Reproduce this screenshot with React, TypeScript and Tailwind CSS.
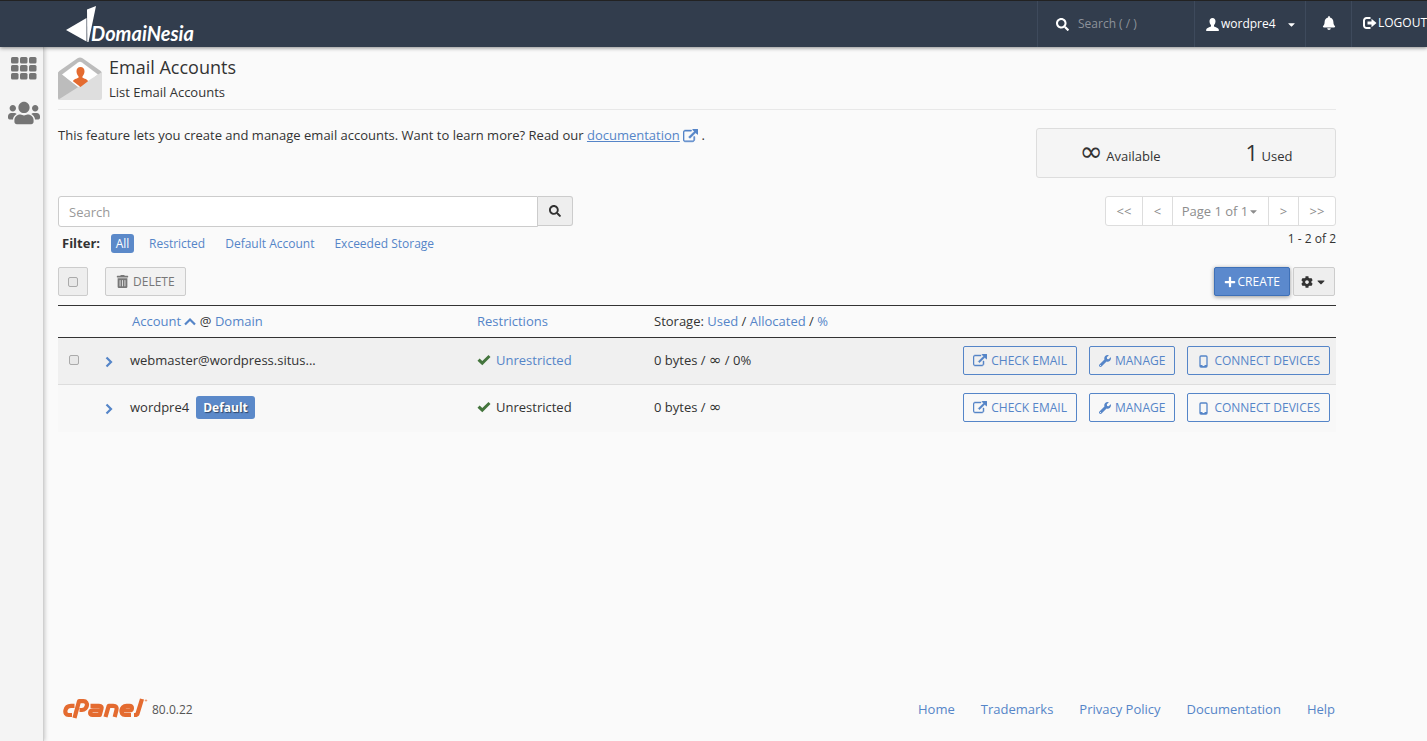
import type { ReactNode } from "react";
import { FaBell, FaCaretDown, FaCog, FaPlus, FaSearch, FaTrashAlt, FaUsers, FaWrench } from "react-icons/fa";

const link = "text-[#5585c8] hover:underline";

function ExternalLinkIcon({ size = 15 }: { size?: number }) {
  return (
    <svg width={size} height={size} viewBox="0 0 1792 1792" fill="currentColor" stroke="currentColor" strokeWidth="60" className="inline-block shrink-0" aria-hidden>
      <path d="M1408 928v320q0 119-84.5 203.5t-203.5 84.5h-832q-119 0-203.5-84.5t-84.5-203.5v-832q0-119 84.5-203.5t203.5-84.5h704q14 0 23 9t9 23v64q0 14-9 23t-23 9h-704q-66 0-113 47t-47 113v832q0 66 47 113t113 47h832q66 0 113-47t47-113v-320q0-14 9-23t23-9h64q14 0 23 9t9 23zm384-864v512q0 26-19 45t-45 19-45-19l-176-176-652 652q-10 10-23 10t-23-10l-114-114q-10-10-10-23t10-23l652-652-176-176q-19-19-19-45t19-45 45-19h512q26 0 45 19t19 45z" />
    </svg>
  );
}

function MobileIcon() {
  return (
    <svg width="13" height="13" viewBox="0 0 13 13" aria-hidden>
      <rect x="3" y="1" width="7" height="11" rx="1" fill="none" stroke="currentColor" strokeWidth="1.3" />
      <path d="M3 10h2.500v1h2v-1H10v2H3z" fill="currentColor" />
    </svg>
  );
}

function UserIcon() {
  return (
    <svg width="13" height="13" viewBox="0 0 13 13" fill="currentColor" className="shrink-0" aria-hidden>
      <path d="M6.500 0C8.400 0 9.500 1.400 9.500 3.300c0 1.500-.6 3-1.500 3.900v1.200c1.600.9 4.500 1.400 4.800 3V13H.2v-1.600c.3-1.600 3.200-2.100 4.800-3V7.200c-.9-.9-1.500-2.400-1.500-3.900C3.500 1.400 4.600 0 6.500 0z" />
    </svg>
  );
}

function LogoutIcon() {
  return (
    <svg width="14" height="12" viewBox="0 0 14 12" className="shrink-0" aria-hidden>
      <path d="M7.500 1H3.500A2.500 2.500 0 0 0 1 3.500v5A2.500 2.500 0 0 0 3.500 11h4" fill="none" stroke="currentColor" strokeWidth="2" />
      <path d="M4.500 4.500h4V1.800L13.500 6l-5 4.200V7.500h-4z" fill="currentColor" />
    </svg>
  );
}

function Chevron({ up = false }: { up?: boolean }) {
  return (
    <svg width="12" height="12" viewBox="0 0 12 12" fill="none" stroke="currentColor" strokeWidth="2.200" className="inline-block" aria-hidden>
      <path d={up ? "M1 8.500l5-5 5 5" : "M3.500 1.500L8 6l-4.500 4.500"} />
    </svg>
  );
}

function CheckIcon() {
  return (
    <svg width="14" height="12" viewBox="0 0 14 12" fill="#44753d" aria-hidden>
      <path d="M.5 6.700L2.600 4.500l2.700 2.600L11.500 1l2 2-8.200 8.200z" />
    </svg>
  );
}

function GridIcon() {
  const cells = [0, 9, 18];
  return (
    <svg width="26" height="23" viewBox="0 0 26 23" fill="#757575" aria-hidden>
      {cells.map((x) => cells.map((y) => <rect key={`${x}-${y}`} x={x} y={y * 0.89} width="7.500" height="6.600" rx="1.500" />))}
    </svg>
  );
}

function MailboxIcon() {
  return (
    <svg width="44" height="44" viewBox="0 0 44 44" className="mt-px" aria-hidden>
      <path d="M0 16.500Q0 15 1.300 14L19.500 1.200q2.500-1.600 5 0L42.700 14Q44 15 44 16.500V40H0z" fill="#bcbcbc" />
      <path d="M4 17.500L20 5.500q2-1.300 4 0l16 12L22 32z" fill="#fff" />
      <path d="M0 15l22 16.500L6 43H2q-2 0-2-2z" fill="#bcbcbc" />
      <path d="M44 15v26q0 2-2 2H2q-.9 0-1.400-.6z" fill="#dedede" />
      <path d="M22.500 10c2.600 0 4 1.700 4 4.300 0 2-.8 3.700-2 4.900v1.500c2 1 5 1.300 5.500 3.500L22.500 30 15 24.200c.5-2.200 3.500-2.500 5.500-3.500v-1.500c-1.200-1.200-2-2.900-2-4.900 0-2.600 1.400-4.300 4-4.300z" fill="#e46b30" />
    </svg>
  );
}

function DomainesiaLogo() {
  return (
    <svg width="140" height="40" viewBox="0 0 140 40" role="img" aria-label="DomaiNesia">
      <path d="M0 24L20.500 12v23.500z" fill="#fff" />
      <path d="M21 3.500L30 0 25 24 22.500 36 21.300 36z" fill="#fff" />
      <text x="25" y="35" fill="#fff" fontFamily="Lato, sans-serif" fontSize="20" fontWeight="700" fontStyle="italic">DomaiNesia</text>
    </svg>
  );
}

function CpanelLogo() {
  return (
    <svg width="85" height="22" viewBox="0 0 85 22" fill="none" stroke="#e46b30" strokeWidth="4.200" strokeLinejoin="round" role="img" aria-label="cPanel">
      <path d="M11.500 7.800H8C1.500 7.800.5 17 5.500 17h3.500" />
      <path d="M11.500 20L16 3.200h4.500c5.500 0 4 8.800-1.500 8.800h-2.500" />
      <path d="M27.500 7.800h8.500c2.500 0 3 1.200 2.500 3L36.800 17H29.500c-3.500 0-3-4.600.5-4.600h7" />
      <path d="M42.500 19l3.200-11.200h4.500c3 0 4 1.500 3.200 4.500L51.700 19" />
      <path d="M68 17h-6c-5.500 0-4.500-9.200 1.500-9.200h3c3.500 0 3 4.600 0 4.600h-6" />
      <path d="M71 17h1c1.200 0 2.300-.5 2.600-1.600L79 1" />
      <circle cx="83" cy="2.500" r=".7" strokeWidth=".7" />
    </svg>
  );
}

function Infinity({ large = false }: { large?: boolean }) {
  return <span className={`font-['DejaVu_Sans',sans-serif] leading-none ${large ? "text-[28px]" : "text-[15px]"}`}>∞</span>;
}

function ActionButton({ icon, children }: { icon: ReactNode; children: ReactNode }) {
  return (
    <button className="flex h-[29px] items-center gap-1 rounded-[2px] border border-[#5585c8] px-[9px] pt-[2px] text-[12px] text-[#5585c8] whitespace-nowrap">
      {icon}
      {children}
    </button>
  );
}

function Header() {
  return (
    <header className="relative z-20 flex h-[47px] shrink-0 items-stretch overflow-hidden border-t border-[#222] bg-[#323d4d] text-[12px] text-white shadow-[0_1px_4px_rgba(0,0,0,0.45)]">
      <a href="#" className="mt-[5px] ml-[66px]">
        <DomainesiaLogo />
      </a>
      <div className="ml-auto flex shrink-0 items-stretch">
        <label className="flex w-[157px] items-center gap-[9px] border-l border-[#3e4a5c] pl-[18px]">
          <FaSearch size={13} />
          <input type="text" placeholder="Search ( / )" aria-label="Search features" className="w-24 bg-transparent outline-none placeholder:text-[#8d929a]" />
        </label>
        <button className="flex w-[111px] items-center border-l border-[#3e4a5c] pl-[11px]">
          <UserIcon />
          <span className="ml-[2px]">wordpre4</span>
          <FaCaretDown size={11} className="ml-[10px]" />
        </button>
        <button aria-label="Notifications" className="flex w-[46px] items-center justify-center border-l border-[#3e4a5c] pb-[2px]">
          <FaBell size={14} />
        </button>
        <a href="#" className="flex w-[76px] items-center gap-px border-l border-[#3e4a5c] pb-[2px] pl-[11px] whitespace-nowrap">
          <LogoutIcon />
          LOGOUT
        </a>
      </div>
    </header>
  );
}

function Sidebar() {
  return (
    <nav className="flex w-11 shrink-0 flex-col items-center border-r border-[#d0d0d0] bg-[#f4f4f4] pt-[10px] pl-[5px] shadow-[1px_0_4px_rgba(0,0,0,0.2)]">
      <a href="#" aria-label="Home">
        <GridIcon />
      </a>
      <a href="#" aria-label="User manager" className="mt-[17px] text-[#757575]">
        <FaUsers size={32} />
      </a>
    </nav>
  );
}

function Pager() {
  const item = "border-r border-[#ddd] text-[#8d8d8d] last:border-r-0";
  return (
    <div className="flex h-[30px] rounded-[3px] border border-[#ddd] bg-white">
      <button className={`${item} w-[37px]`}>&lt;&lt;</button>
      <button className={`${item} w-[30px]`}>&lt;</button>
      <button className={`${item} flex w-[96px] items-center justify-center`}>
        Page 1 of 1
        <FaCaretDown size={11} />
      </button>
      <button className={`${item} w-[30px]`}>&gt;</button>
      <button className={`${item} w-[36px]`}>&gt;&gt;</button>
    </div>
  );
}

const filters = ["Restricted", "Default Account", "Exceeded Storage"];

const accounts = [
  { name: "webmaster@wordpress.situs...", isDefault: false, percent: " / 0%" },
  { name: "wordpre4", isDefault: true, percent: "" },
];

function AccountsTable() {
  return (
    <table className="w-full table-fixed border-t border-[#333] text-left">
      <colgroup>
        <col className="w-[36px]" />
        <col className="w-[36px]" />
        <col className="w-[347px]" />
        <col className="w-[177px]" />
        <col className="w-[240px]" />
        <col />
      </colgroup>
      <thead>
        <tr className="h-8 border-b border-[#333] [&>th]:pb-[2px] [&>th]:font-normal">
          <th />
          <th />
          <th className="pl-[2px]">
            <a href="#" className={link}>Account <Chevron up /></a> @ <a href="#" className={link}>Domain</a>
          </th>
          <th>
            <a href="#" className={link}>Restrictions</a>
          </th>
          <th>
            Storage: <a href="#" className={link}>Used</a> / <a href="#" className={link}>Allocated</a> / <a href="#" className={link}>%</a>
          </th>
          <th />
        </tr>
      </thead>
      <tbody>
        {accounts.map((account) => (
          <tr key={account.name} className="h-[47px] border-b border-[#ddd] bg-[#f0f0f0] last:border-b-0 last:bg-[#f8f8f8] [&>td]:pb-[2px]">
            <td className="pl-[11px]">
              {!account.isDefault && (
                <input type="checkbox" aria-label={`Select ${account.name}`} className="block size-[10px] appearance-none rounded-[2px] border border-[#aaa] bg-[#e8e8e8]" />
              )}
            </td>
            <td className="pl-[9px]">
              <button aria-label={`Expand ${account.name}`} className="block text-[#5585c8]">
                <Chevron />
              </button>
            </td>
            <td>
              {account.name}
              {account.isDefault && (
                <span className="ml-[7px] inline-block rounded-[3px] bg-[#5b89c9] px-[7px] py-[2px] text-xs leading-[19px] font-bold text-white text-shadow-[1px_1px_1px_rgba(0,0,0,0.5)]">
                  Default
                </span>
              )}
            </td>
            <td>
              <span className="flex items-center gap-[5px]">
                <CheckIcon />
                {account.isDefault ? "Unrestricted" : <a href="#" className={link}>Unrestricted</a>}
              </span>
            </td>
            <td>
              0 bytes / <Infinity />
              {account.percent}
            </td>
            <td>
              <div className="flex justify-end gap-3 pr-[6px]">
                <ActionButton icon={<ExternalLinkIcon size={14} />}>CHECK EMAIL</ActionButton>
                <ActionButton icon={<FaWrench size={12} />}>MANAGE</ActionButton>
                <ActionButton icon={<MobileIcon />}>CONNECT DEVICES</ActionButton>
              </div>
            </td>
          </tr>
        ))}
      </tbody>
    </table>
  );
}

function Footer() {
  return (
    <footer className="mt-auto flex items-center justify-between pb-[21px] pl-[5px]">
      <div className="flex items-center gap-1 text-[12px] text-[#555]">
        <CpanelLogo />
        <span className="pt-[2px]">80.0.22</span>
      </div>
      <nav className="flex gap-[26px] pr-[1px]">
        {["Home", "Trademarks", "Privacy Policy", "Documentation", "Help"].map((label) => (
          <a key={label} href="#" className={link}>
            {label}
          </a>
        ))}
      </nav>
    </footer>
  );
}

export default function App() {
  return (
    <div className="flex min-h-screen flex-col bg-[#fafafa] font-['Open_Sans','Noto_Sans',sans-serif] text-[13px] leading-5 text-[#333]">
      <Header />
      <div className="flex grow">
        <Sidebar />
        <main className="mr-[91px] ml-[14px] flex grow flex-col pt-[9px]">
          <div className="flex gap-[7px] border-b border-[#e8e8e8] pb-[7px]">
            <MailboxIcon />
            <div>
              <h1 className="text-lg leading-[22px]">Email Accounts</h1>
              <p className="mt-[4px]">List Email Accounts</p>
            </div>
          </div>

          <div className="mt-[18px] flex items-start justify-between">
            <p className="-mt-[3px]">
              This feature lets you create and manage email accounts. Want to learn more? Read our{" "}
              <a href="#" className="text-[#5585c8]">
                <span className="underline">documentation</span> <ExternalLinkIcon />
              </a>{" "}
              .
            </p>
            <div className="flex h-[50px] w-[300px] items-baseline justify-around rounded-[3px] border border-[#ddd] bg-[#f5f5f5] pt-[9px]">
              <span><Infinity large /> Available</span>
              <span><span className="text-[22px]">1</span> Used</span>
            </div>
          </div>

          <div className="mt-[18px] flex items-start justify-between">
            <div className="flex w-[515px]">
              <input type="text" placeholder="Search" aria-label="Search accounts" className="h-[31px] grow rounded-l-[3px] border border-[#ccc] bg-white px-[10px] outline-none placeholder:text-[#999]" />
              <button aria-label="Search" className="flex h-[30px] w-[35px] items-center justify-center rounded-r-[3px] border border-l-0 border-[#ccc] bg-[#eee]">
                <FaSearch size={12} />
              </button>
            </div>
            <Pager />
          </div>

          <div className="flex items-start justify-between">
            <div className="mt-[5px] flex items-center pl-1 text-[12px]">
              <span className="text-[13px] font-bold">Filter:</span>
              <button className="mr-[15px] ml-[11px] h-[19px] w-[23px] rounded-[3px] bg-[#5b89c9] leading-[19px] text-white">All</button>
              <div className="flex gap-5 pt-[2px]">
                {filters.map((filter) => (
                  <button key={filter} className={link}>{filter}</button>
                ))}
              </div>
            </div>
            <span className="mt-[2px] text-[12px]">1 - 2 of 2</span>
          </div>

          <div className="mt-[13px] mb-[9px] flex h-[29px] items-stretch">
            <label className="flex w-[30px] items-center justify-center rounded-[2px] border border-[#ccc] bg-[#eee]">
              <input type="checkbox" aria-label="Select all" className="size-[10px] appearance-none rounded-[2px] border border-[#aaa] bg-[#e8e8e8]" />
            </label>
            <button className="ml-[17px] flex items-center gap-1 rounded-[2px] border border-[#ccc] bg-[#f2f2f2] px-[10px] text-[12px] text-[#777]">
              <FaTrashAlt size={13} />
              DELETE
            </button>
            <button className="ml-auto flex items-center gap-[2px] rounded-[2px] border border-[#3e70b7] bg-[#5b89cd] px-[9px] text-[12px] text-white shadow-[0_1px_4px_rgba(0,0,0,0.4)]">
              <FaPlus size={12} />
              CREATE
            </button>
            <button aria-label="Settings" className="mr-px ml-[3px] flex w-[42px] items-center justify-center gap-[2px] rounded-[2px] border border-[#ccc] bg-[#eee]">
              <FaCog size={12} />
              <FaCaretDown size={12} />
            </button>
          </div>

          <AccountsTable />
          <Footer />
        </main>
      </div>
    </div>
  );
}
